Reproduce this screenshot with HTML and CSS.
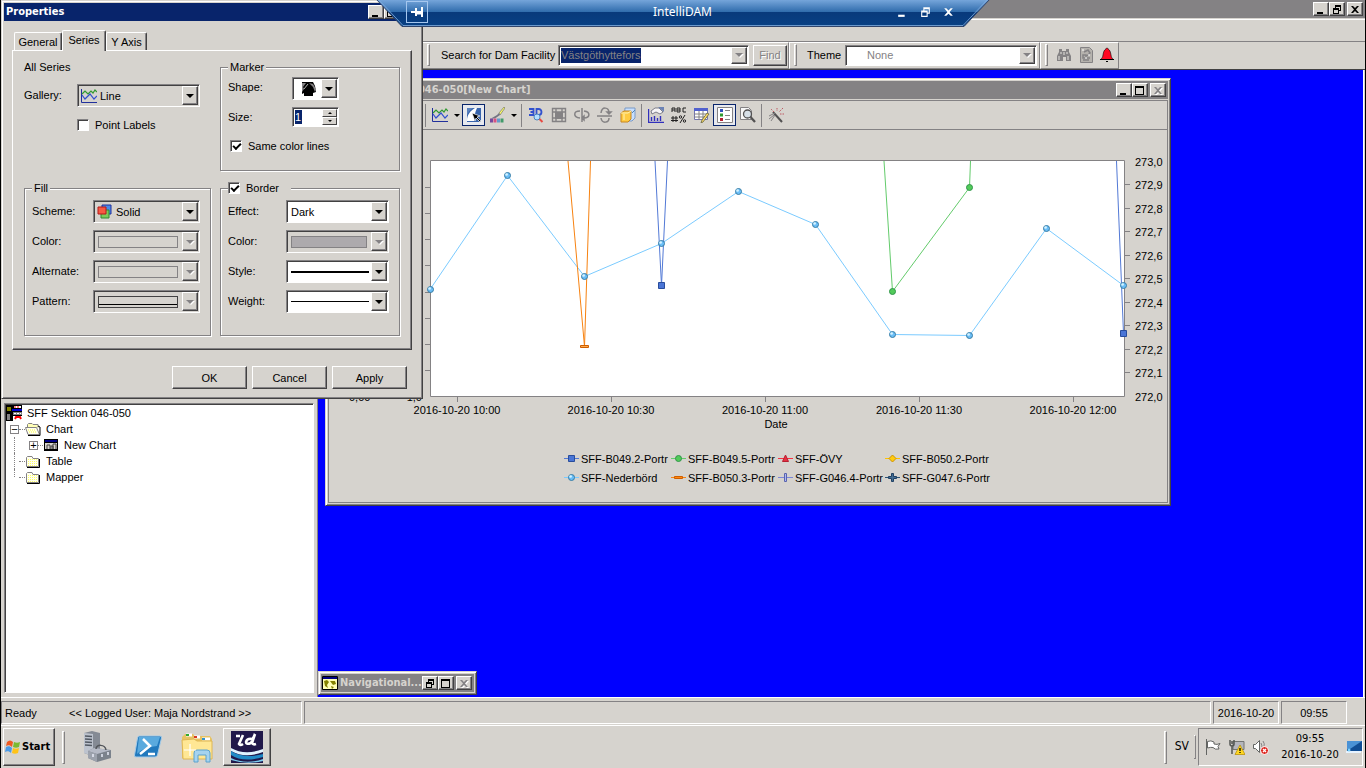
FILE: index.html
```html
<!DOCTYPE html>
<html lang="en">
<head>
<meta charset="utf-8">
<title>IntelliDAM</title>
<link rel="stylesheet" href="styles.css">
</head>
<body>
<svg class="defs" aria-hidden="true">
  <symbol id="min" viewBox="0 0 12 11"><path d="M2 8h6v2H2z"/></symbol>
  <symbol id="max" viewBox="0 0 12 11"><path d="M1 1h9v9H1zM2 3v6h7V3z" fill-rule="evenodd"/></symbol>
  <symbol id="restore" viewBox="0 0 12 11"><path d="M4 1h6v6H8V6h1V3H5v1H4zM2 4h6v6H2zM3 6v3h4V6z" fill-rule="evenodd"/></symbol>
  <symbol id="close" viewBox="0 0 12 11"><path d="M2 2h2l2 2 2-2h2L7 5.500l3 3.500H8L6 7 4 9H2l3-3.500z"/></symbol>
  <symbol id="linechart" viewBox="0 0 16 16"><path d="M.5 1v13.500H16" fill="none" stroke="#21309c"/><path d="M1 6l3-3 3 3 3-3 2 2 2-3 2 2" fill="none" stroke="#319a31" stroke-width="1.200"/><path d="M1 7l3 4 5-5 4 5 3-3" fill="none" stroke="#3151ce" stroke-width="1.200"/></symbol>
  <symbol id="folder" viewBox="0 0 16 16"><path d="M1.500 13.500v-9l1-1H7l1 2h5.500v8z" fill="#fffff0" stroke="#848284"/><path d="M3 6.500h10M3 8.500h10M3 10.500h10M3 12.500h10" stroke="#ffff63" stroke-dasharray="1 1"/><path d="M2 14.500h12.500V6" fill="none" stroke="#000"/></symbol>
  <symbol id="orb" viewBox="0 0 9 9"><circle cx="4.500" cy="4.500" r="3" fill="#6bbef7" stroke="#397da5"/><circle cx="3.600" cy="3.500" r="1.300" fill="#d6f3ff"/></symbol>
</svg>

<header class="app-title">
  <div class="caps">
    <button class="cap" aria-label="Minimize"><svg><use href="#min"/></svg></button><button class="cap" aria-label="Restore"><svg><use href="#restore"/></svg></button><button class="cap cap-close" aria-label="Close"><svg><use href="#close"/></svg></button>
  </div>
</header>
<nav class="menu-row" aria-label="Menu"></nav>
<div class="app-tools">
  <form class="band band-search">
    <i class="grip"></i>
    <label for="dam">Search for Dam Facility</label>
    <div class="combo combo-dam"><input id="dam" class="picked" value="Västgöthyttefors" readonly><i class="arrow off"></i></div>
    <button class="btn find" type="button" disabled>Find</button>
  </form>
  <div class="band band-theme">
    <i class="grip"></i>
    <label for="theme">Theme</label>
    <div class="combo combo-theme"><select id="theme" disabled><option>None</option></select><i class="arrow off"></i></div>
  </div>
  <div class="band band-icons">
    <i class="grip"></i>
    <button class="flat" aria-label="Find object"><svg viewBox="0 0 16 16"><path d="M3 2h3v2h4V2h3v3l2 4v5h-5v-4H7v4H1V9l2-4z" fill="#848284"/><path d="M3 9v4M8 5v3M12 9v4M5 5v2M11 5v2" stroke="#e7e5e0"/></svg></button>
    <button class="flat" aria-label="Report"><svg viewBox="0 0 16 16"><path d="M2.500.5h9l3 3v12h-12z" fill="#b5b2ad" stroke="#848284"/><path d="M6 5l4-2 2 3-3 3M5 8h3v3H5zM9 11h3M5 13h6" fill="none" stroke="#848284" stroke-width="1.500"/><path d="M4 3h2M10 8h2M7 11h2" stroke="#fff"/></svg></button>
    <button class="flat" aria-label="Alarm"><svg viewBox="0 0 16 16"><path d="M8 1c-1 0-1 1-1 1-2 1-2.500 3-3 6-.3 2-1 3.500-2.500 4.500h13C13 11.500 12.300 10 12 8c-.5-3-1-5-3-6 0 0 0-1-1-1z" fill="#ff0821" stroke="#000" stroke-width=".6"/><path d="M1 12.500h14M7 14.500h2" stroke="#000"/></svg></button>
  </div>
</div>

<main class="main">
  <aside class="sidebar">
    <div class="dock-top"></div>
    <ul class="tree">
      <li><svg viewBox="0 0 16 16"><path d="M0 0h16v16H0z"/><path d="M1 2h4v4H1z" fill="#848200"/><path d="M8 1h7v2H8z" fill="#fff"/><path d="M9 1v2M12 1v2" stroke="#f00"/><path d="M6 4h10v2H6z" fill="#0000d6"/><path d="M7 7h9v3H7z" fill="#848284"/><path d="M8 8.500h7" stroke="#fff" stroke-dasharray="2 1"/><path d="M7 11h9v5H7z" fill="#fff"/><path d="M9 14l1-2h4l1 2" fill="none" stroke="#f00" stroke-width="2"/><path d="M1 9h3v6H1z" fill="#848284"/></svg><span>SFF Sektion 046-050</span></li>
      <li class="l1"><i class="node">−</i><i class="dots"></i><svg viewBox="0 0 16 16"><path d="M2.500 12.500V3.500l1-1H7l1 1h5v3" fill="#ffffb5" stroke="#848284"/><path d="M.5 6.500h11l3 7H3z" fill="#fffff0" stroke="#848284"/><path d="M3 9h8M4 11h8" stroke="#ffff31" stroke-dasharray="1 1"/><path d="M3 14.500h12V6l-2-1" fill="none" stroke="#000"/></svg><span>Chart</span></li>
      <li class="l2"><i class="trunk"></i><i class="node">+</i><i class="dots short"></i><svg viewBox="0 0 16 16"><path d="M1 2h14v12H1z"/><path d="M2 3h12v2H2z" fill="#000084"/><path d="M2 6h12v6H2z" fill="#d6d3ce"/><path d="M4 12V8h3v4M8 12V9h2v3M10 12V7h3v5" fill="none" stroke="#424142"/></svg><span>New Chart</span></li>
      <li class="l1"><i class="trunk"></i><i class="dots"></i><svg><use href="#folder"/></svg><span>Table</span></li>
      <li class="l1"><i class="trunk last"></i><i class="dots"></i><svg><use href="#folder"/></svg><span>Mapper</span></li>
    </ul>
  </aside>
  <section class="workspace">
    <article class="window chart-window">
      <header class="win-title"><h2>SFF Sektion 046-050[New Chart]</h2>
        <div class="caps">
          <button class="cap" aria-label="Minimize"><svg><use href="#min"/></svg></button><button class="cap" aria-label="Maximize"><svg><use href="#max"/></svg></button><button class="cap cap-close dim" aria-label="Close"><svg><use href="#close"/></svg></button>
        </div>
      </header>
      <div class="client">
        <div class="chart-tools" role="toolbar">
          <i class="sep"></i>
          <button class="tool" aria-label="Gallery"><svg><use href="#linechart"/></svg></button><button class="drop" aria-label="Gallery options"></button>
          <button class="tool on" aria-label="Select"><svg viewBox="0 0 16 16"><path d="M1 1h14v14H1z" fill="#3965ad"/><path d="M1 14c0-6 3-10 8-13h2c-2 4-3 9-3 13z" fill="#fff"/><path d="M1 1h6Q2 4 1 9z" fill="#5a82bd"/><path d="M6 6l8 3-3 1 4 4-1 1-4-4-1 3z" fill="#000" stroke="#fff" stroke-width=".7"/></svg></button>
          <button class="tool" aria-label="Colors"><svg viewBox="0 0 16 16"><path d="M15 0l-5 6 1 2 5-7z" fill="#ffff63" stroke="#636563" stroke-width=".6"/><path d="M10 6L8 8l-6 3.500h4L11 8z" fill="#737584"/><path d="M1 13.500h3" stroke="#73499c" stroke-width="4"/><path d="M4.500 13.500h3" stroke="#d65184" stroke-width="4"/><path d="M8 13.500h3" stroke="#639acd" stroke-width="4"/><path d="M11.500 13.500h3" stroke="#429a6b" stroke-width="4"/></svg></button><button class="drop" aria-label="Color options"></button>
          <i class="sep"></i>
          <button class="tool" aria-label="3D"><svg viewBox="0 0 16 16"><path d="M1 2h4.500v3H2.500h3v3H1M8.500 2v6h2c4 0 4-6 0-6z" fill="none" stroke="#3151ce" stroke-width="1.800"/><circle cx="9" cy="10" r="3" fill="#b5dfff" stroke="#4a86bd"/><path d="M11.500 12l3 3" stroke="#e74a42" stroke-width="2"/></svg></button>
          <button class="tool" aria-label="Grid"><svg viewBox="0 0 16 16"><path d="M1.500 1.500h13v13h-13zM5 1.500v13M11 1.500v13M1.500 5h13M1.500 11h13" fill="none" stroke="#848284" stroke-width="1.400"/><path d="M4 5h8v7H4z" fill="#848284"/></svg></button>
          <button class="tool" aria-label="Rotate horizontally"><svg viewBox="0 0 16 16"><path d="M8 1v14M6 11C-1 10-1 4 6 4M10 4c7 1 6 7 0 7M10 9v4l-2-2z" fill="none" stroke="#848284" stroke-width="1.500"/></svg></button>
          <button class="tool" aria-label="Rotate vertically"><svg viewBox="0 0 16 16"><path d="M0 9h15M4 6c1-7 8-6 8 0M4 11c1 6 8 5 8 0M10 5h4l-2 2z" fill="none" stroke="#848284" stroke-width="1.500"/></svg></button>
          <button class="tool" aria-label="Clustered"><svg viewBox="0 0 16 16"><path d="M5 1h10v10l-3 3H4z" fill="#c6dfff" stroke="#7b9ac6"/><path d="M1 6l3-2h7v8l-3 3H1z" fill="#ffcb42" stroke="#c68621"/><path d="M4 7v6M1 6h7l3-2" stroke="#fff3b5" fill="none"/><path d="M12 6l3-3" stroke="#4a86bd"/></svg></button>
          <i class="sep"></i>
          <button class="tool" aria-label="Properties"><svg viewBox="0 0 16 16"><path d="M.5 2v13.500H16M3.500 14v-4M6.500 14v-5M9.500 14v-3M12.500 14V9" fill="none" stroke="#3130bd" stroke-width="1.400"/><path d="M3 4l4-3h4l4 4-3 2-4-2-4 2z" fill="#f7f5f7" stroke="#636573" stroke-width=".8"/><path d="M10 0h6v5z" fill="#6b82b5"/></svg></button>
          <button class="tool" aria-label="Axis labels"><svg viewBox="0 0 16 16"><path d="M1 5V1h3v4M1 3h3M6 5V1h3v4H6M6 3h3M15 1h-3v4h3M2 9v6M5 9v6M0 11h7M0 13.500h7M14 8l-5 8" fill="none" stroke="#212021"/><circle cx="9.500" cy="10" r="1.200" fill="none" stroke="#212021"/><circle cx="13.500" cy="14" r="1.200" fill="none" stroke="#212021"/></svg></button>
          <button class="tool" aria-label="Data editor"><svg viewBox="0 0 16 16"><path d="M.5 1.500h13v11H.5z" fill="#fff" stroke="#7375ad"/><path d="M0 2.500h14" stroke="#5261ce" stroke-width="3"/><path d="M.5 7h13M.5 10h13M5 4v9M9 4v9" stroke="#848284" fill="none"/><path d="M15 7l-6 8-2 1 1-3 5-7z" fill="#ffdb63" stroke="#636542" stroke-width=".8"/></svg></button>
          <button class="tool on" aria-label="Legend"><svg viewBox="0 0 16 16"><path d="M.5.5h15v15H.5z" fill="#fff" stroke="#848284"/><path d="M3 2h3v3H3z" fill="#3151bd"/><path d="M3 6.500h3v3H3z" fill="#319a31"/><path d="M3 11h3v3H3z" fill="#b52031"/><path d="M8 3.500h5M8 8.500h5M8 12.500h5" stroke="#848284"/></svg></button>
          <button class="tool" aria-label="Zoom"><svg viewBox="0 0 16 16"><path d="M.5.500h8l3 3v9H.5z" fill="#f7f7f7" stroke="#848284"/><circle cx="7.500" cy="7" r="4" fill="#d6dfe7" stroke="#525152" stroke-width="1.300"/><path d="M10.500 10l4.500 5" stroke="#525152" stroke-width="2.300"/></svg></button>
          <i class="sep"></i>
          <button class="tool" aria-label="Wizard"><svg viewBox="0 0 16 16"><path d="M5 5l9 10" stroke="#525152" stroke-width="2"/><path d="M1 9l6-3M3 14l4-6M1 12l5-4" stroke="#848284"/><path d="M6 5L3 2M9 1v3M15 1l-4 4M12 7h4" stroke="#bd5963" stroke-dasharray="1.500 1"/></svg></button>
        </div>
        <figure class="chart">
          <svg class="plot" viewBox="329 130 838 301" role="img" aria-label="Section measurements by date">
            <path d="M430.500 160.500h694v236h-694z" fill="#fff" stroke="#848284"/>
            <path d="M425 187.500h5M425 213.500h5M425 239.500h5M425 265.500h5M425 292.500h5M425 318.500h5M425 344.500h5M425 370.500h5M1125 184.500h5M1125 208.500h5M1125 231.500h5M1125 255.500h5M1125 278.500h5M1125 302.500h5M1125 325.500h5M1125 349.500h5M1125 372.500h5M457.500 397v5M611.500 397v5M765.500 397v5M919.500 397v5M1073.500 397v5" stroke="#848284"/>
            <path class="series" d="M430 289.500L507.500 175.500 584.500 276.500 661.500 243.500 738.500 191.500 815.500 224.500 892.500 334.500 969.500 335.500 1046.500 228.500 1123.500 285.500" stroke="#7bcbff"/>
            <path class="series" d="M568 161L584.500 346.500 590.500 161" stroke="#f78210"/>
            <path class="series" d="M655 161L661.500 285.500 667.500 161M1116.500 161L1123.500 333.500" stroke="#5279d6"/>
            <path class="series" d="M884 161L892.500 291.500 969.500 187.500 970.500 161" stroke="#63cb6b"/>
            <path d="M658.500 282.500h6v6h-6zM1120.500 330.500h6v6h-6z" fill="#4a75d6" stroke="#294d9c"/>
            <path d="M580.500 345.500h8v2h-8z" fill="#ffaa4a" stroke="#ce5d00"/>
            <g fill="#52cb5a" stroke="#31964a"><circle cx="892.500" cy="291.500" r="3"/><circle cx="969.500" cy="187.500" r="3"/></g>
            <g><use href="#orb" x="426" y="285" width="9" height="9"/><use href="#orb" x="503" y="171" width="9" height="9"/><use href="#orb" x="580" y="272" width="9" height="9"/><use href="#orb" x="657" y="239" width="9" height="9"/><use href="#orb" x="734" y="187" width="9" height="9"/><use href="#orb" x="811" y="220" width="9" height="9"/><use href="#orb" x="888" y="330" width="9" height="9"/><use href="#orb" x="965" y="331" width="9" height="9"/><use href="#orb" x="1042" y="224" width="9" height="9"/><use href="#orb" x="1119" y="281" width="9" height="9"/></g>
            <g class="axis"><text x="1135" y="166">273,0</text><text x="1135" y="189">272,9</text><text x="1135" y="213">272,8</text><text x="1135" y="236">272,7</text><text x="1135" y="260">272,6</text><text x="1135" y="283">272,5</text><text x="1135" y="307">272,4</text><text x="1135" y="330">272,3</text><text x="1135" y="354">272,2</text><text x="1135" y="377">272,1</text><text x="1135" y="401">272,0</text><text x="349" y="401">0,00</text><text x="403" y="401">-1,0</text></g>
            <g class="axis mid"><text x="457" y="414">2016-10-20 10:00</text><text x="611" y="414">2016-10-20 10:30</text><text x="765" y="414">2016-10-20 11:00</text><text x="919" y="414">2016-10-20 11:30</text><text x="1073" y="414">2016-10-20 12:00</text><text x="776" y="428">Date</text></g>
          </svg>
          <figcaption>
            <ul class="legend">
              <li><svg viewBox="0 0 15 9"><path d="M0 4.500h15" stroke="#5279d6"/><path d="M4.500 1.500h6v6h-6z" fill="#4a75d6" stroke="#294d9c"/></svg>SFF-B049.2-Portr</li>
              <li><svg viewBox="0 0 15 9"><path d="M0 4.500h15" stroke="#63cb6b"/><circle cx="7.500" cy="4.500" r="3" fill="#52cb5a" stroke="#31964a"/></svg>SFF-B049.5-Portr</li>
              <li><svg viewBox="0 0 15 9"><path d="M0 4.500h15" stroke="#f73042"/><path d="M7.500 1l3 6.500h-6z" fill="#e73042" stroke="#b52031"/></svg>SFF-ÖVY</li>
              <li><svg viewBox="0 0 15 9"><path d="M0 4.500h15" stroke="#ffc300"/><path d="M7.500 1L11 4.500 7.500 8 4 4.500z" fill="#ffcb10" stroke="#ce9200"/></svg>SFF-B050.2-Portr</li>
              <li><svg viewBox="0 0 15 9"><path d="M0 4.500h15" stroke="#7bcbff"/><use href="#orb" x="3" width="9" height="9"/></svg>SFF-Nederbörd</li>
              <li><svg viewBox="0 0 15 9"><path d="M0 4.500h15" stroke="#f78210"/><path d="M3.500 3.500h8v2h-8z" fill="#ff8a10" stroke="#ce5d00"/></svg>SFF-B050.3-Portr</li>
              <li><svg viewBox="0 0 15 9"><path d="M0 4.500h15" stroke="#7b86d6"/><path d="M6.500.5h2v8h-2z" fill="#adb6f7" stroke="#5a65ad"/></svg>SFF-G046.4-Portr</li>
              <li><svg viewBox="0 0 15 9"><path d="M0 4.500h15M4 4.500h7" stroke="#295173"/><path d="M6.500.5h2v3h3v2h-3v3h-2v-3h-3v-2h3z" fill="#426d94" stroke="#214163"/></svg>SFF-G047.6-Portr</li>
            </ul>
          </figcaption>
        </figure>
      </div>
    </article>

    <article class="window nav-window">
      <header class="win-title"><svg class="win-icon" viewBox="0 0 16 16"><path d="M.5 1.500h15v13H.5z" fill="#ffffb5" stroke="#000"/><path d="M1 2h14v2H1z" fill="#000084"/><path d="M2 6l3-1 2 2-2 3 1 3-3-2zM8 6h5l1 3-3 1zM9 11l3 1-2 2z" fill="#848200"/></svg><h2>Navigational...</h2>
        <div class="caps">
          <button class="cap" aria-label="Restore"><svg><use href="#restore"/></svg></button><button class="cap" aria-label="Maximize"><svg><use href="#max"/></svg></button><button class="cap cap-close dim" aria-label="Close"><svg><use href="#close"/></svg></button>
        </div>
      </header>
    </article>
  </section>
</main>

<footer class="status">
  <div class="cell cell-user"><span>Ready</span><span>&lt;&lt; Logged User: Maja Nordstrand &gt;&gt;</span></div>
  <div class="cell cell-fill"></div>
  <div class="cell cell-end">2016-10-20</div>
  <div class="cell cell-end">09:55</div>
</footer>

<div class="taskbar">
  <button class="start"><svg viewBox="0 0 16 16"><path d="M2 3c2-2 4-2 6 0L7 8C5 6 3 6 1 7z" fill="#ef5921"/><path d="M9 3c2 1 4 1 6 0l-1 5c-2 1-4 1-6 0z" fill="#7bba31"/><path d="M1 8c2-1 4-1 6 1l-1 5c-2-2-4-2-6-1z" fill="#4a9ae7"/><path d="M8 9c2 1 4 1 6 0l-1 5c-2 1-4 1-6 0z" fill="#ffc318"/></svg>Start</button>
  <i class="grip"></i>
  <button class="task" aria-label="Server Manager"><svg viewBox="0 0 32 32"><path d="M3 2l8-2 8 2v20l-8 3-8-3z" fill="#848a94"/><path d="M3 2l9 1v22l-9-3z" fill="#bdc3ce"/><path d="M4 5l7 .5M4 8l7 .5M4 11l7 .5M4 14l7 .5" stroke="#525963" stroke-width="1.500"/><path d="M7 20l6-3 17 2v8l-14 4-9-4z" fill="#7b828c"/><path d="M7 20l6-3 17 2-14 4z" fill="#b5bac6"/><path d="M7 20l9 3v8l-9-4z" fill="#9ca2ad"/><path d="M15 18c0-5 9-5 10 1" fill="none" stroke="#52555a" stroke-width="1.500"/><path d="M12 23v3M21 23v3M27 21v3" stroke="#e7ebf7" stroke-width="1.500"/></svg></button>
  <button class="task" aria-label="PowerShell"><svg viewBox="0 0 32 32"><path d="M8 5h21q2 0 1.500 2l-4 17q-.5 2-2.500 2H5q-2 0-1.500-2l3-17Q7 5 8 5z" fill="#2179bd" stroke="#a5cbe7"/><path d="M8 6h21l-3 9Q12 16 6 23z" fill="#5aaade"/><path d="M12 8l7 7-10 8M17 23h7" fill="none" stroke="#fff" stroke-width="2.500"/></svg></button>
  <button class="task" aria-label="Explorer"><svg viewBox="0 0 32 32"><path d="M1 6l3-3h8l2 2h15l2 3v19H1z" fill="#e7c363"/><path d="M5 4h6M13 6h6M21 8h8" stroke="#fff" stroke-width="3"/><path d="M5 4h3" stroke="#31aa31" stroke-width="2"/><path d="M13 6h3" stroke="#d63921" stroke-width="2"/><path d="M21 8h3" stroke="#3192ce" stroke-width="2"/><path d="M1 9l12-1 3 2h15v18H2z" fill="#ffe794" stroke="#deb652"/><path d="M13 31v-9q0-3 3-3h10q3 0 3 3v9h-4v-7h-8v7z" fill="#a5d3ef" stroke="#5aa2ce"/><path d="M9 13v12M3 19h12" stroke="#fff" stroke-width="1.200"/></svg></button>
  <button class="task current" aria-label="IntelliDAM"><svg viewBox="0 0 32 32"><path d="M0 0h32v32H0z" fill="#21184a"/><path d="M12 4L8 13q1 2 4 0M5 5h4M22 8q-6-1-7 3 0 3 5 1l4-9-3 9q1 2 4 1" fill="none" stroke="#fff" stroke-width="2.600"/><path d="M0 17q14 8 32 1v3q-18 7-32-1z" fill="#dff3ff"/><path d="M0 20q12 8 32 3v3q-20 6-32-2z" fill="#218ac6"/><path d="M0 27q15 7 32 1v2q-16 4-32-1z" fill="#7bcbef"/></svg></button>
  <div class="tray-side">
    <i class="grip"></i><span class="lang">SV</span><i class="grip thin"></i>
    <div class="tray">
      <svg viewBox="0 0 16 16"><path d="M1.500 0v16" stroke="#636563"/><path d="M2.500 2.500Q6 1 9 3v2q3 1 6-.5l-2 3 1 2.500q-4 1-6-1.500Q6 8 2.500 9z" fill="#fff" stroke="#636563"/></svg>
      <svg viewBox="0 0 16 16"><path d="M4 2.500h11v8H4z" fill="#b5b6bd" stroke="#737573"/><path d="M1 1v4q0 2 2 2t2-2V1M3 2v3M3 7v8" fill="none" stroke="#525552" stroke-width="1.500"/><path d="M11 6l5 9.500H6z" fill="#ffd721" stroke="#b58a00" stroke-width=".7"/><path d="M11 9v3M11 13v1" stroke="#000" stroke-width="1.300"/></svg>
      <svg viewBox="0 0 16 16"><path d="M.5 5.500h2l4-4v12l-4-4h-2z" fill="#fff" stroke="#636563"/><path d="M8 4q2 3 0 6M10 2q2 3 1 5" fill="none" stroke="#848284"/><circle cx="11.500" cy="11.500" r="4" fill="#de2821" stroke="#fff"/><path d="M10 10l3 3M13 10l-3 3" stroke="#fff" stroke-width="1.300"/></svg>
      <time class="clock">09:55<br>2016-10-20</time>
      <svg viewBox="0 0 16 16"><path d="M1 2h15v10H1z" fill="#104d94"/><path d="M1 2h15L4 10H1z" fill="#4a92d6"/><path d="M0 13h15" stroke="#e7f3ff" stroke-width="2"/><circle cx="3" cy="11" r="1.500" fill="#7bd3ff"/></svg>
    </div>
  </div>
</div>

<section class="dialog" role="dialog" aria-labelledby="dlg-title">
  <header class="dlg-title"><h1 id="dlg-title">Properties</h1>
    <div class="caps"><button class="cap" aria-label="Minimize"><svg><use href="#min"/></svg></button><button class="cap" aria-label="Maximize"><svg><use href="#max"/></svg></button><button class="cap cap-close" aria-label="Close"><svg><use href="#close"/></svg></button></div>
  </header>
  <div class="tabs" role="tablist"><button role="tab">General</button><button role="tab" class="active" aria-selected="true">Series</button><button role="tab">Y Axis</button></div>
  <form class="panel">
    <div class="all-series">
      <h3>All Series</h3>
      <div class="row"><label for="gallery">Gallery:</label><div class="combo tinted"><svg><use href="#linechart"/></svg><select id="gallery"><option>Line</option></select><i class="arrow"></i></div></div>
      <label class="check"><input type="checkbox">Point Labels</label>
    </div>
    <fieldset class="marker">
      <legend>Marker</legend>
      <div class="row"><label for="shape">Shape:</label><div class="combo"><svg class="shape" viewBox="0 0 16 16"><path d="M1 1h11l2 4 1 6-3 1v3H3v-3l-2 1z"/><path d="M1 2h4L2 6l1 2-2 3zM8 2l4 1 3 5-1 3-2-5z" fill="#848284"/><path d="M3 8l4-5" stroke="#fff" stroke-width=".7"/></svg><select id="shape" aria-label="Shape"><option></option></select><i class="arrow"></i></div></div>
      <div class="row"><label for="size">Size:</label><div class="combo spin"><input id="size" class="picked" type="number" value="1"><span class="spins"><i class="up"></i><i class="down"></i></span></div></div>
      <label class="check"><input type="checkbox" checked>Same color lines</label>
    </fieldset>
    <fieldset class="fill">
      <legend>Fill</legend>
      <div class="row"><label for="scheme">Scheme:</label><div class="combo tinted"><svg viewBox="0 0 16 16"><path d="M5 1h9v9H5z" fill="#4a8ae7" stroke="#21309c"/><path d="M4 6h8v8H4z" fill="#7bcb5a" stroke="#318a31"/><path d="M1 3h8v7H1z" fill="#f75942" stroke="#b51818"/></svg><select id="scheme"><option>Solid</option></select><i class="arrow"></i></div></div>
      <div class="row"><label for="fcolor">Color:</label><div class="combo tinted"><i class="swatch"></i><select id="fcolor" disabled><option></option></select><i class="arrow off"></i></div></div>
      <div class="row"><label for="alt">Alternate:</label><div class="combo tinted"><i class="swatch"></i><select id="alt" disabled><option></option></select><i class="arrow off"></i></div></div>
      <div class="row"><label for="pattern">Pattern:</label><div class="combo tinted"><i class="swatch lined"></i><select id="pattern" disabled><option></option></select><i class="arrow off"></i></div></div>
    </fieldset>
    <fieldset class="border">
      <legend><label class="check"><input type="checkbox" checked>Border</label></legend>
      <div class="row"><label for="effect">Effect:</label><div class="combo"><select id="effect"><option>Dark</option></select><i class="arrow"></i></div></div>
      <div class="row"><label for="bcolor">Color:</label><div class="combo tinted"><i class="swatch grey"></i><select id="bcolor" disabled><option></option></select><i class="arrow off"></i></div></div>
      <div class="row"><label for="style">Style:</label><div class="combo"><i class="stroke thick"></i><select id="style"><option></option></select><i class="arrow"></i></div></div>
      <div class="row"><label for="weight">Weight:</label><div class="combo"><i class="stroke"></i><select id="weight"><option></option></select><i class="arrow"></i></div></div>
    </fieldset>
  </form>
  <div class="actions"><button class="btn">OK</button><button class="btn">Cancel</button><button class="btn">Apply</button></div>
</section>

<div class="remote-bar">
  <svg class="remote-shape" viewBox="0 0 614 27" preserveAspectRatio="none" aria-hidden="true">
    <defs><linearGradient id="sky" x1="0" y1="0" x2="0" y2="1"><stop offset="0" stop-color="#7baade"/><stop offset=".46" stop-color="#316dad"/><stop offset=".47" stop-color="#08397b"/><stop offset="1" stop-color="#084184"/></linearGradient></defs>
    <path d="M0-1L26 26.500H588L614-1z" fill="url(#sky)" stroke="#31456b"/><path d="M2-1L27 25.500H587L612-1" fill="none" stroke="#84aede" stroke-width=".8"/>
  </svg>
  <button class="pin" aria-label="Pin"><svg viewBox="0 0 14 12"><path d="M1 6h5M6 2v8M6 6h6M12 1v10" fill="none" stroke="#fff" stroke-width="2"/><path d="M6 7.500h6" stroke="#fff" stroke-width="2"/></svg></button>
  <span class="remote-name">IntelliDAM</span>
  <div class="remote-caps"><button aria-label="Minimize"><svg><use href="#min"/></svg></button><button aria-label="Restore"><svg><use href="#restore"/></svg></button><button aria-label="Close"><svg><use href="#close"/></svg></button></div>
</div>
</body>
</html>
```

FILE: styles.css
```css
:root {
  --face: #d6d3ce;
  --shade: #848284;
  --dark: #424142;
  --navy: #08246b;
  --ui: "Liberation Sans", Arial, sans-serif;
  --caption: "DejaVu Sans Condensed", "DejaVu Sans", sans-serif;
}
* { box-sizing: border-box; }
body {
  margin: 0;
  position: relative;
  display: flex;
  flex-direction: column;
  height: 100vh;
  overflow: hidden;
  border: solid #000;
  border-width: 0 1px;
  background: var(--face);
  color: #000;
  font: 11px/14px var(--ui);
}
h1, h2, h3, ul, figure { margin: 0; padding: 0; }
h1, h2, h3 { font-size: 11px; font-weight: normal; }
ul { list-style: none; }
i { font-style: normal; }
button, input, select {
  margin: 0;
  padding: 0;
  border: 0;
  border-radius: 0;
  background: none;
  color: inherit;
  font: inherit;
  appearance: none;
  outline: 0;
}
svg { display: block; flex: none; width: 16px; height: 16px; }
.defs { position: absolute; width: 0; height: 0; }

/* Raised and sunken edges */
.btn, .cap, .arrow, .start {
  background: var(--face);
  border: 1px solid;
  border-color: #fff var(--dark) var(--dark) #fff;
  box-shadow: inset -1px -1px var(--shade);
}
.combo {
  display: flex;
  align-items: stretch;
  height: 23px;
  padding: 1px;
  border: 1px solid;
  border-color: var(--shade) #fff #fff var(--shade);
  box-shadow: inset 1px 1px var(--dark);
  background: #fff;
  min-width: 0;
}
.combo.tinted { background: var(--face); }
.combo svg { align-self: center; margin-left: 2px; }
.combo select { flex: 1; min-width: 0; padding-left: 3px; opacity: 1; }
.arrow { display: grid; place-items: center; width: 16px; flex: none; }
.arrow::after, .drop::after {
  content: "";
  border: solid transparent;
  border-width: 4px 4px 0;
  border-top-color: #000;
}
.arrow.off::after { border-top-color: var(--shade); filter: drop-shadow(1px 1px #fff); }
.picked { background: var(--navy); color: var(--shade); }

.caps { display: flex; margin-left: auto; padding-right: 2px; }
.cap { display: grid; place-items: center; width: 16px; height: 14px; }
.cap svg { width: 12px; height: 11px; }
.cap-close { margin-left: 2px; }
.cap.dim svg { fill: var(--shade); filter: drop-shadow(1px 1px #fff); }

/* Application frame */
.app-title { display: flex; align-items: center; height: 19px; background: var(--shade); border-bottom: 1px solid var(--face); }
.menu-row { height: 22px; border-top: 1px solid #fff; }
.app-tools {
  display: flex;
  height: 29px;
  padding-left: 421px;
  border: solid;
  border-color: var(--shade) transparent var(--dark);
  border-width: 1px 0 1px;
}
.band {
  display: flex;
  align-items: center;
  padding-bottom: 1px;
  border: 1px solid;
  border-color: #fff var(--shade) var(--shade) #fff;
}
.band > .grip { height: 22px; }
.grip { width: 3px; border: 1px solid; border-color: #fff var(--shade) var(--shade) #fff; flex: none; }
.band-search { width: 367px; padding-left: 4px; }
.band-search label { padding-left: 11px; white-space: nowrap; flex: 1; }
.band .combo { height: 21px; }
.combo-dam { width: 191px; }
.combo-dam input { flex: none; width: 80px; height: 15px; margin: 1px auto 0 1px; }
.find { width: 34px; height: 21px; margin: 0 1px 0 4px; color: var(--shade); text-shadow: 1px 1px #fff; }
.band-theme { width: 251px; padding-left: 4px; }
.band-theme label { padding-left: 10px; flex: 1; }
.combo-theme { width: 192px; margin-right: 2px; }
.combo-theme select { padding-left: 20px; color: var(--shade); }
.band-icons { width: 79px; padding-left: 4px; }
.band-icons .grip { margin-right: 5px; }
.flat { width: 22px; display: grid; place-items: center; }

.main { display: flex; flex: 1; min-height: 0; }
.sidebar { display: flex; flex-direction: column; width: 317px; padding: 0 3px 4px; border-right: 1px solid var(--shade); }
.dock-top { height: 333px; flex: none; }
.tree {
  flex: 1;
  padding: 1px 0 0;
  background: #fff;
  border: 1px solid;
  border-color: var(--shade) #fff #fff var(--shade);
  box-shadow: inset 1px 1px var(--dark);
}
.tree li { display: flex; align-items: center; height: 16px; padding-left: 1px; }
.tree li span { padding-left: 5px; }
.tree .l1 { padding-left: 5px; }
.tree .l2 { padding-left: 5px; }
.node { width: 9px; height: 9px; border: 1px solid var(--shade); font: 11px/7px var(--ui); text-align: center; }
.dots { width: 6px; border-top: 1px dotted var(--shade); }
.dots.short { width: 5px; }
.trunk { width: 5px; height: 16px; margin-left: 4px; border-left: 1px dotted var(--shade); }
.trunk.last { height: 8px; margin-bottom: 8px; }
.l2 .trunk { margin-right: 10px; }
.workspace { position: relative; flex: 1; background: #00f; border-right: 1px solid #fff; margin-right: 1px; }

/* Child windows on the workspace */
.window { position: absolute; background: var(--face); border: 1px solid; border-color: var(--face) var(--dark) var(--dark) var(--face); box-shadow: inset 1px 1px #fff, inset -1px -1px var(--shade); padding: 2px; }
.win-title { display: flex; align-items: center; height: 18px; background: var(--shade); color: var(--face); }
.win-title h2 { font: bold 11px/14px var(--caption); white-space: nowrap; }
.chart-window { left: 7px; top: 8px; width: 846px; }
.chart-window h2 { padding-left: 20px; }
.client { margin-top: 1px; border: 1px solid var(--shade); }
.chart-tools { display: flex; align-items: center; height: 29px; padding-left: 94px; border-bottom: 1px solid var(--shade); }
.sep { width: 5px; height: 23px; border-left: 1px solid var(--shade); margin-left: 2px; margin-right: -2px; }
.tool { display: grid; place-items: center; width: 23px; height: 22px; flex: none; border: 1px solid transparent; }
.tool.on { border-color: var(--navy); background: #e7e9ef; }
.drop { display: grid; place-items: center; width: 11px; height: 22px; flex: none; }
.drop::after { border-width: 3px 3px 0; }
.plot { width: 100%; height: auto; }
.series { fill: none; stroke-width: 1; }
.axis { font: 11px var(--ui); }
.mid { text-anchor: middle; }
.legend { display: grid; grid-template-columns: repeat(4, 107px); grid-auto-rows: 19px; padding: 18px 0 15px 235px; }
.legend li { display: flex; align-items: center; gap: 2px; white-space: nowrap; }
.legend svg { width: 15px; height: 9px; }
.nav-window { left: 0; bottom: 2px; width: 159px; }
.nav-window .win-icon { margin: 0 2px 0 1px; }

/* Status bar and taskbar */
.status { display: flex; gap: 2px; height: 28px; padding: 3px 18px 1px 0; border-top: 1px solid #fff; }
.cell { display: flex; align-items: center; justify-content: center; border: 1px solid; border-color: var(--shade) #fff #fff var(--shade); }
.cell-user { width: 301px; padding-left: 3px; justify-content: flex-start; }
.cell-user span:first-child { width: 64px; }
.cell-fill { flex: 1; }
.cell-end { width: 66px; }
.taskbar { display: flex; align-items: center; height: 43px; padding: 0 2px; border-top: 1px solid #fff; }
.taskbar .grip { height: 33px; }
.start { display: flex; align-items: center; gap: 1px; width: 52px; height: 38px; padding-left: 1px; font: bold 11px/14px var(--caption); }
.start + .grip { margin: 0 8px 0 7px; }
.task { display: grid; place-items: center; width: 48px; height: 38px; margin-right: 2px; border: 1px solid transparent; }
.task svg { width: 32px; height: 32px; }
.task.current { border-color: #fff var(--dark) var(--dark) #fff; box-shadow: inset -1px -1px var(--shade); }
.tray-side { display: flex; align-items: center; margin-left: auto; font: 11px/16px var(--caption); }
.lang { padding: 0 5px 2px 8px; font-size: 12px; }
.tray-side .thin { height: 24px; width: 2px; border-left: 0; margin-right: 2px; }
.tray { display: flex; align-items: center; gap: 8px; height: 38px; width: 165px; padding-left: 6px; border: 1px solid; border-color: var(--shade) #fff #fff var(--shade); }
.clock { width: 62px; margin: 0 -2px 0 3px; text-align: center; }

/* Properties dialog */
.dialog {
  position: absolute;
  left: 0;
  top: 0;
  width: 422px;
  padding: 2px 2px 9px;
  background: var(--face);
  border: 1px solid;
  border-color: var(--face) var(--dark) var(--dark) var(--face);
  box-shadow: inset 1px 1px #fff, inset -1px -1px var(--shade);
}
.dlg-title { display: flex; align-items: center; height: 18px; padding-left: 2px; background: var(--navy); color: #fff; }
.dlg-title h1 { font: bold 11px/14px var(--caption); }
.dlg-title .cap { color: #000; }
.tabs { display: flex; align-items: flex-end; height: 20px; margin: 9px 0 0 10px; }
.tabs button { height: 18px; padding: 0 5px; border: 1px solid; border-color: #fff var(--dark) transparent #fff; border-bottom: 0; border-radius: 2px 2px 0 0; box-shadow: inset -1px 0 var(--shade); }
.tabs button:first-child { width: 48px; padding: 0 3px; }
.tabs button:last-child { width: 41px; padding: 0 3px; }
.tabs .active { width: 44px; height: 21px; margin-bottom: -1px; padding-bottom: 3px; background: var(--face); position: relative; }
.panel {
  display: grid;
  grid-template-columns: 187fr 180fr;
  grid-template-rows: 111px 155px;
  gap: 10px 9px;
  margin: 0 8px;
  padding: 9px 11px 13px;
  border: 1px solid;
  border-color: #fff var(--dark) var(--dark) #fff;
  box-shadow: inset -1px -1px var(--shade);
}
fieldset { margin: 0; min-width: 0; padding: 5px 10px 0 7px; border: 1px solid var(--shade); box-shadow: 1px 1px #fff, inset 1px 1px #fff; }
legend { height: 14px; padding: 0 2px; background: var(--face); }
.row { display: flex; align-items: flex-start; margin-bottom: 7px; }
.row > label { width: 58px; padding-top: 4px; flex: none; }
.row > .combo { flex: 1; }
.all-series .row { margin: 10px 11px 11px 0; }
.all-series .row > label { width: 53px; }
.all-series .check { margin-left: 53px; }
.check { display: flex; align-items: center; gap: 6px; height: 14px; }
.check input {
  width: 12px;
  height: 12px;
  background: #fff;
  border: 1px solid;
  border-color: var(--shade) #fff #fff var(--shade);
  box-shadow: inset 1px 1px var(--dark);
}
.check input:checked::after { content: ""; display: block; width: 6px; height: 3px; margin: 2px 0 0 2px; border: solid #000; border-width: 0 0 2px 2px; transform: rotate(-45deg); }
.marker { padding-top: 3px; }
.marker .row > label { width: 64px; padding-top: 3px; }
.marker .row > .combo { flex: none; width: 47px; }
.marker .shape { margin-left: 7px; }
.marker .check { margin: 12px 0 0 2px; }
.marker .spin { height: 20px; justify-content: space-between; }
.spin input { width: 7px; height: 14px; margin: 1px; color: #fff; appearance: textfield; }
.spin input::-webkit-inner-spin-button { display: none; }
.spins { display: grid; width: 15px; }
.spins i { display: grid; place-items: center; background: var(--face); border: 1px solid; border-color: #fff var(--dark) var(--dark) #fff; }
.spins i::after { content: ""; border: solid transparent; border-width: 0 2px 2px; border-bottom-color: #000; }
.spins .down::after { transform: rotate(180deg); }
.fill .row > label { width: 61px; }
.border legend { padding: 0 12px 0 0; }
.border .row:last-child, .fill .row:last-child { margin-bottom: 0; }
.swatch { width: 80px; height: 12px; margin: 4px 0 0 3px; border: 1px solid var(--shade); flex: none; }
.border .swatch { width: 76px; }
.swatch.grey { background: #adaaad; }
.swatch.lined { border-color: var(--dark); background: linear-gradient(#000, #000) 0 7px / 100% 1px no-repeat; }
.stroke { width: 78px; height: 1px; margin-left: 3px; background: #000; align-self: center; flex: none; }
.stroke.thick { height: 2px; }
.swatch + select, .stroke + select { padding: 0; }
.actions { display: flex; justify-content: flex-end; gap: 5px; margin: 16px 13px 0 0; }
.actions .btn { width: 75px; height: 23px; }

/* Remote session bar */
.remote-bar { position: absolute; left: 50%; top: 0; display: flex; align-items: center; width: 614px; height: 27px; margin-left: -307px; padding: 0 35px 3px 30px; color: #fff; }
.remote-shape { position: absolute; inset: 0; width: 100%; height: 100%; }
.pin, .remote-name, .remote-caps { position: relative; }
.pin { display: grid; place-items: center; width: 22px; height: 22px; border: 1px solid #a5c7ef; }
.pin svg { width: 14px; height: 12px; }
.remote-name { flex: 1; padding-left: 41px; text-align: center; font: 12px/16px "Noto Sans", sans-serif; }
.remote-caps { display: flex; gap: 10px; }
.remote-caps svg { width: 13px; height: 12px; fill: #fff; }
```
